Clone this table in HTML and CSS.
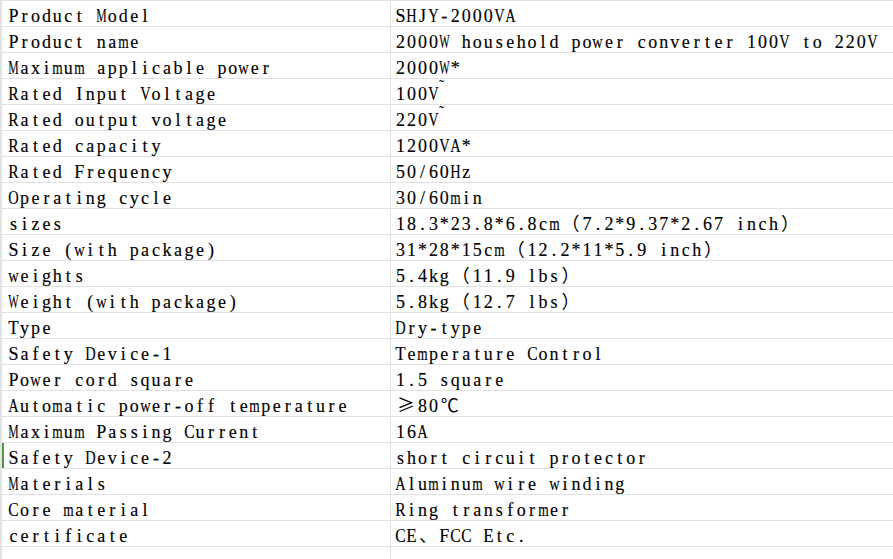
FILE: index.html
```html
<!DOCTYPE html>
<html>
<head>
<meta charset="utf-8">
<link rel="stylesheet" href="styles.css">
</head>
<body>
<div class="sheet">
  <div class="row"><div class="k">Product Model</div><div class="v">SHJY-2000VA</div></div>
  <div class="row"><div class="k">Product name</div><div class="v">2000W household power converter 100V to 220V</div></div>
  <div class="row"><div class="k">Maximum applicable power</div><div class="v">2000W*</div></div>
  <div class="row"><div class="k">Rated Input Voltage</div><div class="v">100V<span class="tl">˜</span></div></div>
  <div class="row"><div class="k">Rated output voltage</div><div class="v">220V<span class="tl">˜</span></div></div>
  <div class="row"><div class="k">Rated capacity</div><div class="v">1200VA*</div></div>
  <div class="row"><div class="k">Rated Frequency</div><div class="v">50/60Hz</div></div>
  <div class="row"><div class="k">Operating cycle</div><div class="v">30/60min</div></div>
  <div class="row"><div class="k">sizes</div><div class="v">18.3*23.8*6.8cm<span class="fw">（</span>7.2*9.37*2.67 inch<span class="fw">）</span></div></div>
  <div class="row"><div class="k">Size (with package)</div><div class="v">31*28*15cm<span class="fw">（</span>12.2*11*5.9 inch<span class="fw">）</span></div></div>
  <div class="row"><div class="k">weights</div><div class="v">5.4kg<span class="fw">（</span>11.9 lbs<span class="fw">）</span></div></div>
  <div class="row"><div class="k">Weight (with package)</div><div class="v">5.8kg<span class="fw">（</span>12.7 lbs<span class="fw">）</span></div></div>
  <div class="row"><div class="k">Type</div><div class="v">Dry-type</div></div>
  <div class="row"><div class="k">Safety Device-1</div><div class="v">Temperature Control</div></div>
  <div class="row"><div class="k">Power cord square</div><div class="v">1.5 square</div></div>
  <div class="row"><div class="k">Automatic power-off temperature</div><div class="v"><span class="fw">≥</span>80<span class="fw">℃</span></div></div>
  <div class="row"><div class="k">Maximum Passing Current</div><div class="v">16A</div></div>
  <div class="row"><div class="k sel">Safety Device-2</div><div class="v">short circuit protector</div></div>
  <div class="row"><div class="k">Materials</div><div class="v">Aluminum wire winding</div></div>
  <div class="row"><div class="k">Core material</div><div class="v">Ring transformer</div></div>
  <div class="row"><div class="k">certificate</div><div class="v">CE<span class="fw">、</span>FCC Etc.</div></div>
  <div class="row"><div class="k"></div><div class="v"></div></div>
</div>
<script src="script.js"></script>
</body>
</html>
```
FILE: styles.css
```css
html, body {
  margin: 0;
  padding: 0;
  background: #ffffff;
}
body {
  width: 893px;
  height: 559px;
  overflow: hidden;
}
.sheet {
  border-left: 2px solid #e3e3e3;
  border-top: 1px solid #e1e1e1;
  font-family: "Liberation Serif", "Noto Sans CJK SC", serif;
  font-size: 18px;
  color: #000000;
}
.row {
  display: flex;
  height: 26px;
  box-sizing: border-box;
  border-bottom: 1px solid #e1e1e1;
}
.k {
  width: 389px;
  flex: none;
  box-sizing: border-box;
  border-right: 1px solid #e1e1e1;
  padding-left: 6px;
  padding-top: 6px;
  line-height: 18px;
  white-space: nowrap;
}
.k.sel {
  box-shadow: inset 2px 0 0 #4f9a3a;
}
.v {
  flex: 1;
  padding-left: 4px;
  padding-top: 6px;
  line-height: 18px;
  white-space: nowrap;
}
.c {
  display: inline-block;
  width: 10.97px;
  white-space: pre;
}
.g {
  display: inline-block;
  transform-origin: 0 50%;
  -webkit-text-stroke: 0.15px #000000;
}
.fw {
  display: inline-block;
  width: 21.94px;
  text-align: center;
  font-family: "Noto Sans CJK SC", sans-serif;
  font-size: 18px;
  line-height: 0;
}
.tl {
  display: inline-block;
  font-size: 16px;
  line-height: 0;
  vertical-align: 9px;
}
```
FILE: script.js
```js
(function () {
  var CELL = 10.97;
  var MAX = 10.4;
  var cells = document.querySelectorAll('.k, .v');
  var glyphs = [];
  cells.forEach(function (cell) {
    var nodes = Array.prototype.slice.call(cell.childNodes);
    nodes.forEach(function (node) {
      if (node.nodeType !== 3) return;
      var text = node.nodeValue;
      var frag = document.createDocumentFragment();
      for (var i = 0; i < text.length; i++) {
        var c = document.createElement('span');
        c.className = 'c';
        var g = document.createElement('span');
        g.className = 'g';
        g.textContent = text[i];
        c.appendChild(g);
        frag.appendChild(c);
        glyphs.push(g);
      }
      cell.replaceChild(frag, node);
    });
  });
  glyphs.forEach(function (g) {
    var w = g.getBoundingClientRect().width;
    if (w > MAX) {
      var s = MAX / w;
      g.style.transform = 'translateX(' + ((CELL - MAX) / 2).toFixed(2) + 'px) scaleX(' + s.toFixed(3) + ')';
    } else {
      g.style.transform = 'translateX(' + ((CELL - w) / 2).toFixed(2) + 'px)';
    }
  });
})();
```
